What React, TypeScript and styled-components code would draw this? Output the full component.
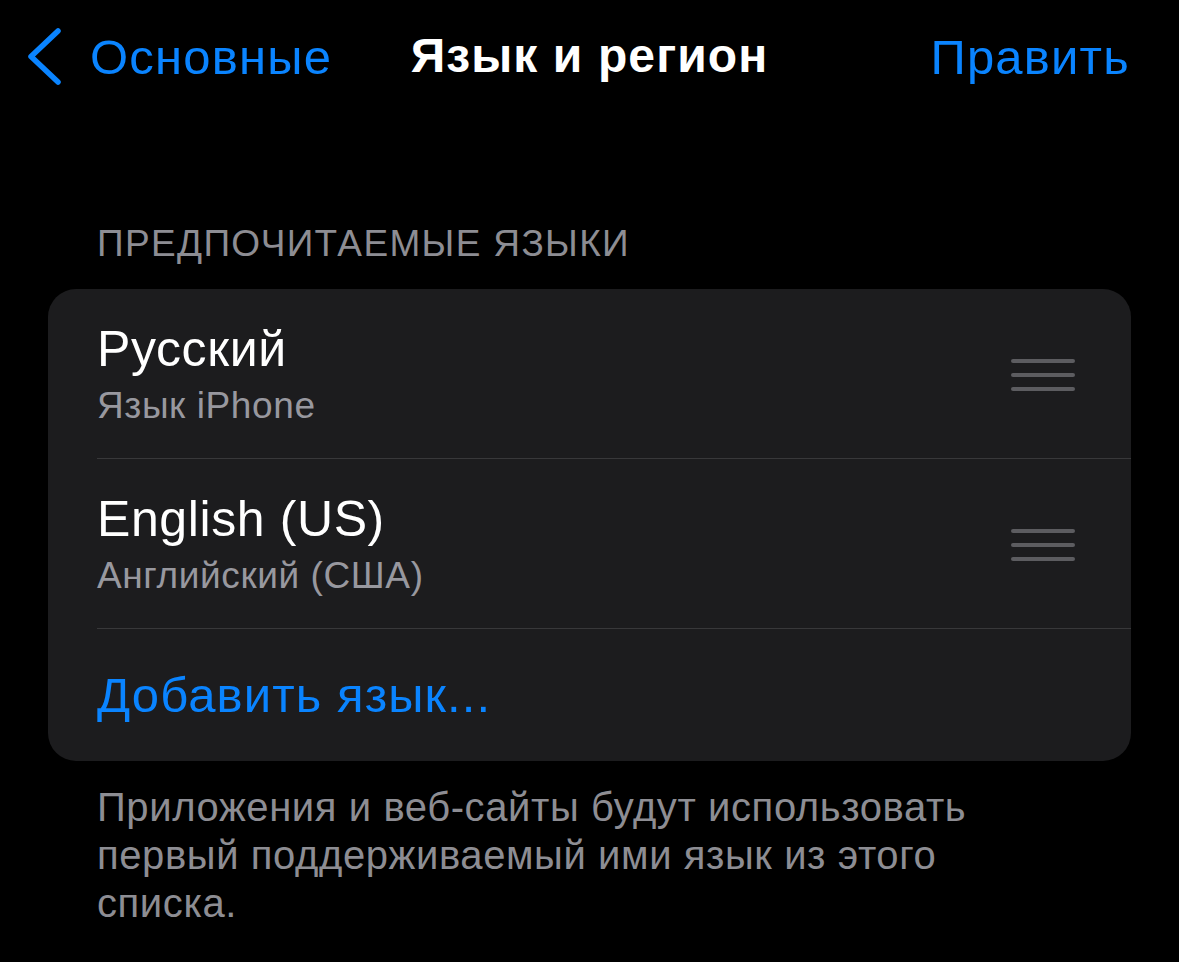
import React from 'react'
import styled, { createGlobalStyle } from 'styled-components'

const GlobalStyle = createGlobalStyle`
  html, body {
    margin: 0;
    padding: 0;
    background: #000;
  }
  body {
    font-family: "Liberation Sans", Arial, sans-serif;
    -webkit-font-smoothing: antialiased;
  }
`

const Screen = styled.div`
  width: 1179px;
  height: 962px;
  overflow: hidden;
  background: #000;
  color: #fff;
`

const NavBar = styled.div`
  display: grid;
  grid-template-columns: 1fr auto 1fr;
  align-items: center;
  padding: 28px 28px 0 28px;
  height: 58px;
`

const BackButton = styled.div`
  display: flex;
  align-items: center;
  gap: 28px;
  color: #0a84ff;
  font-size: 49px;
  line-height: 58px;
  letter-spacing: 1.2px;
`

const NavTitle = styled.div`
  font-size: 48px;
  font-weight: 700;
  line-height: 58px;
  letter-spacing: 1.1px;
  margin-top: -3px;
`

const NavAction = styled.div`
  justify-self: end;
  margin-right: 21px;
  color: #0a84ff;
  font-size: 49px;
  line-height: 58px;
  letter-spacing: 1.2px;
`

const Content = styled.div`
  padding: 0 48px 0 48px;
`

const SectionHeader = styled.div`
  margin-top: 136px;
  padding-left: 49px;
  font-size: 37px;
  line-height: 44px;
  color: #8d8d93;
  letter-spacing: 1.35px;
`

const Card = styled.div`
  margin-top: 23px;
  background: #1c1c1e;
  border-radius: 28px;
  overflow: hidden;
`

const Row = styled.div<{ $height: number; $last?: boolean }>`
  box-sizing: border-box;
  height: ${p => p.$height}px;
  margin-left: 49px;
  padding-right: 56px;
  display: flex;
  align-items: center;
  justify-content: space-between;
  border-bottom: ${p => (p.$last ? 'none' : '1.5px solid #38383a')};
`

const RowText = styled.div`
  display: flex;
  flex-direction: column;
  gap: 5px;
`

const RowTitle = styled.div`
  font-size: 50px;
  line-height: 60px;
  letter-spacing: 0.6px;
  color: #fff;
`

const RowSubtitle = styled.div`
  font-size: 37px;
  line-height: 44px;
  letter-spacing: 0.6px;
  color: #98989f;
`

const AddLink = styled.div`
  font-size: 49px;
  line-height: 58px;
  letter-spacing: 1.1px;
  color: #0a84ff;
`

const Handle = styled.div`
  display: flex;
  flex-direction: column;
  gap: 10px;
  width: 64px;
  margin-top: 3px;

  span {
    display: block;
    height: 4px;
    border-radius: 2px;
    background: #5c5c60;
  }
`

const Footer = styled.p`
  margin: 22px 0 0 0;
  padding: 0 49px;
  font-size: 40px;
  line-height: 48px;
  letter-spacing: 0.6px;
  color: #8d8d93;
`

const languages = [
  { name: 'Русский', note: 'Язык iPhone' },
  { name: 'English (US)', note: 'Английский (США)' },
]

function Chevron() {
  return (
    <svg width="34" height="58" viewBox="0 0 34 58">
      <path
        d="M30 3 L3 28.5 L30 54"
        fill="none"
        stroke="#0a84ff"
        strokeWidth="5.5"
        strokeLinecap="round"
        strokeLinejoin="round"
      />
    </svg>
  )
}

export default function App() {
  return (
    <Screen>
      <GlobalStyle />
      <NavBar>
        <BackButton>
          <Chevron />
          <span>Основные</span>
        </BackButton>
        <NavTitle>Язык и регион</NavTitle>
        <NavAction>Править</NavAction>
      </NavBar>
      <Content>
        <SectionHeader>ПРЕДПОЧИТАЕМЫЕ ЯЗЫКИ</SectionHeader>
        <Card>
          {languages.map(lang => (
            <Row key={lang.name} $height={170}>
              <RowText>
                <RowTitle>{lang.name}</RowTitle>
                <RowSubtitle>{lang.note}</RowSubtitle>
              </RowText>
              <Handle>
                <span />
                <span />
                <span />
              </Handle>
            </Row>
          ))}
          <Row $height={132} $last>
            <AddLink>Добавить язык...</AddLink>
          </Row>
        </Card>
        <Footer>
          Приложения и веб-сайты будут использовать
          <br />
          первый поддерживаемый ими язык из этого
          <br />
          списка.
        </Footer>
      </Content>
    </Screen>
  )
}
